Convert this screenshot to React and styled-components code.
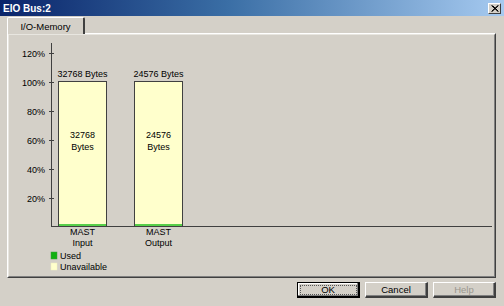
import React from "react";
import styled, { createGlobalStyle } from "styled-components";

const Global = createGlobalStyle`
  html, body {
    margin: 0;
    padding: 0;
    background: #d4d0c8;
  }
  body {
    font-family: "Liberation Sans", Arial, sans-serif;
    font-size: 9px;
    color: #000;
  }
`;

const Window = styled.div`
  width: 504px;
  height: 306px;
  background: #d4d0c8;
  display: flex;
  flex-direction: column;
  box-sizing: border-box;
  overflow: hidden;
`;

const TitleBar = styled.div`
  height: 16px;
  display: flex;
  align-items: center;
  justify-content: space-between;
  padding: 0 3px 0 3px;
  background: linear-gradient(to right, #0a246a 0%, #3a6ea5 45%, #a6caf0 100%);
  color: #fff;
  font-weight: bold;
  font-size: 10px;
`;

const CloseButton = styled.div`
  width: 13px;
  height: 11px;
  box-sizing: border-box;
  background: #d4d0c8;
  border-top: 1px solid #fff;
  border-left: 1px solid #fff;
  border-right: 1px solid #404040;
  border-bottom: 1px solid #404040;
  display: flex;
  align-items: center;
  justify-content: center;
`;

const Body = styled.div`
  padding: 1px 8px 0 7px;
  display: flex;
  flex-direction: column;
`;

const TabStrip = styled.div`
  display: flex;
  height: 16px;
`;

const Tab = styled.div`
  width: 78px;
  box-sizing: border-box;
  background: #d4d0c8;
  border-top: 1px solid #fff;
  border-left: 1px solid #fff;
  border-right: 2px solid #404040;
  border-top-left-radius: 2px;
  border-top-right-radius: 2px;
  display: flex;
  align-items: center;
  justify-content: center;
  font-size: 9.5px;
  position: relative;
  z-index: 1;
  margin-bottom: -1px;
`;

const Panel = styled.div`
  height: 245px;
  box-sizing: border-box;
  border-top: 1px solid #fff;
  border-left: 1px solid #fff;
  border-right: 1px solid #404040;
  border-bottom: 1px solid #404040;
`;

const PanelInner = styled.div`
  height: 100%;
  box-sizing: border-box;
  border-top: 1px solid #e8e6e0;
  border-left: 1px solid #e8e6e0;
  border-right: 1px solid #808080;
  border-bottom: 1px solid #808080;
`;

const ButtonRow = styled.div`
  display: flex;
  justify-content: flex-end;
  gap: 5px;
  padding: 4px 8px 0 0;
`;

const Button = styled.div`
  width: 63px;
  height: 16px;
  box-sizing: border-box;
  display: flex;
  align-items: center;
  justify-content: center;
  font-size: 9.5px;
  color: ${(p) => (p.$disabled ? "#9a978f" : "#000")};
  border-top: 1px solid ${(p) => (p.$default ? "#000" : "#fff")};
  border-left: 1px solid ${(p) => (p.$default ? "#000" : "#fff")};
  border-right: ${(p) => (p.$default ? "2px solid #000" : "2px solid #404040")};
  border-bottom: ${(p) => (p.$default ? "2px solid #000" : "2px solid #404040")};
  box-shadow: ${(p) => (p.$default ? "inset -1px -1px 0 #808080, inset 1px 1px 0 #fff" : "inset -1px -1px 0 #808080")};
  outline: ${(p) => (p.$default ? "1px dotted #555" : "none")};
  outline-offset: -4px;
`;

const ChartSvg = styled.svg`
  display: block;
  font-family: "Liberation Sans", Arial, sans-serif;
  font-size: 9px;
`;

const ticks = [
  { y: 53, label: "120%" },
  { y: 82, label: "100%" },
  { y: 111, label: "80%" },
  { y: 140, label: "60%" },
  { y: 169, label: "40%" },
  { y: 198, label: "20%" },
];

const bars = [
  { x: 58, bytes: "32768", name: "MAST", sub: "Input" },
  { x: 134, bytes: "24576", name: "MAST", sub: "Output" },
];

const Chart = () => (
  <ChartSvg width="485" height="241" viewBox="9 35 485 241">
    <line x1="51.5" y1="43" x2="51.5" y2="226" stroke="#404040" />
    <line x1="51" y1="226.5" x2="492" y2="226.5" stroke="#404040" />
    {ticks.map((t) => (
      <g key={t.label}>
        <line x1="49" y1={t.y + 0.5} x2="54" y2={t.y + 0.5} stroke="#404040" />
        <text x="45" y={t.y + 3.5} textAnchor="end" fill="#000">
          {t.label}
        </text>
      </g>
    ))}
    {bars.map((b) => (
      <g key={b.sub}>
        <rect x={b.x + 0.5} y="81.5" width="48" height="145" fill="#ffffcc" stroke="#404040" />
        <line x1={b.x + 1} y1="225" x2={b.x + 48} y2="225" stroke="#1fbf1f" strokeWidth="1.5" />
        <text x={b.x + 24.5} y="77" textAnchor="middle">
          {b.bytes} Bytes
        </text>
        <text x={b.x + 24.5} y="138" textAnchor="middle">
          {b.bytes}
        </text>
        <text x={b.x + 24.5} y="150" textAnchor="middle">
          Bytes
        </text>
        <text x={b.x + 24.5} y="235" textAnchor="middle">
          {b.name}
        </text>
        <text x={b.x + 24.5} y="246" textAnchor="middle">
          {b.sub}
        </text>
      </g>
    ))}
    <rect x="51" y="252" width="6" height="7" fill="#10b010" stroke="#3c9c3c" strokeWidth="0.5" />
    <text x="60" y="259">Used</text>
    <rect x="51" y="263" width="6" height="7" fill="#ffffcc" stroke="#f0f0c0" strokeWidth="0.5" />
    <text x="60" y="270">Unavailable</text>
  </ChartSvg>
);

export default function App() {
  return (
    <Window>
      <Global />
      <TitleBar>
        <span>EIO Bus:2</span>
        <CloseButton>
          <svg width="8" height="7" viewBox="0 0 8 7">
            <path d="M0.5 0.5 L7 6.5 M1.5 0.5 L7.5 6.5 M7 0.5 L0.5 6.5 M7.5 0.5 L1 6.5" stroke="#000" strokeWidth="1" />
          </svg>
        </CloseButton>
      </TitleBar>
      <Body>
        <TabStrip>
          <Tab>I/O-Memory</Tab>
        </TabStrip>
        <Panel>
          <PanelInner>
            <Chart />
          </PanelInner>
        </Panel>
      </Body>
      <ButtonRow>
        <Button $default>OK</Button>
        <Button>Cancel</Button>
        <Button $disabled>Help</Button>
      </ButtonRow>
    </Window>
  );
}
